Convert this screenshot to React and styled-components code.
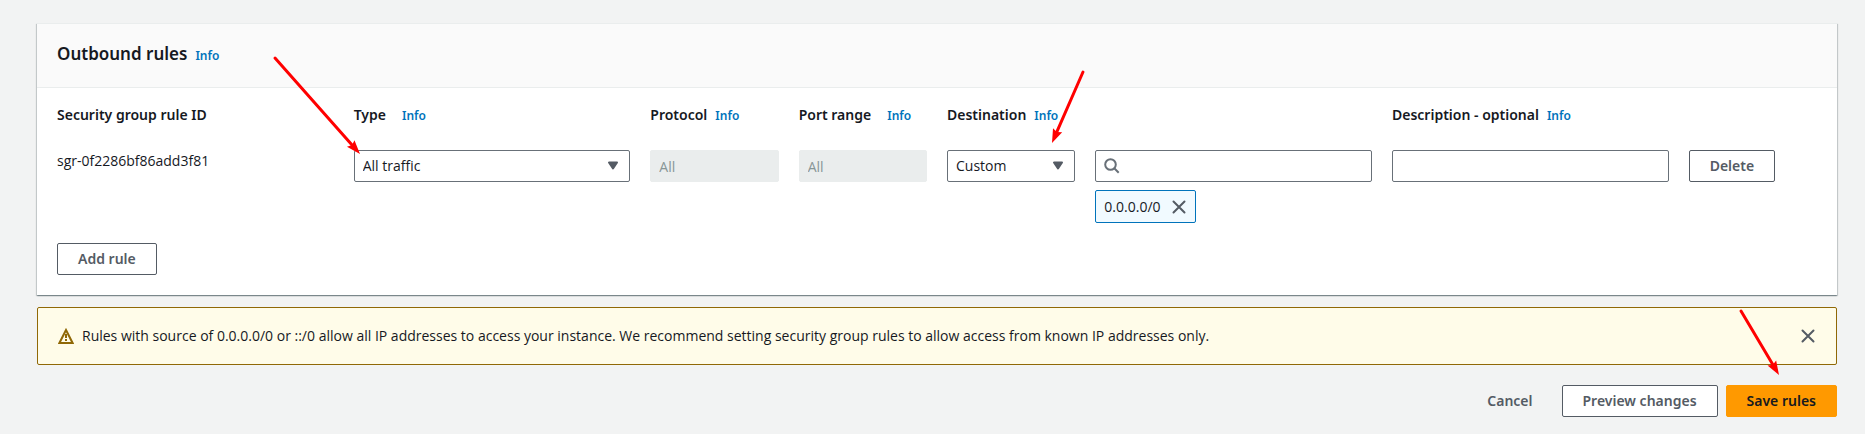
import React from "react";
import styled, { createGlobalStyle, css } from "styled-components";

const headingFont = `"Noto Sans", "Open Sans", sans-serif`;

const GlobalStyle = createGlobalStyle`
  *, *::before, *::after { box-sizing: border-box; }
  body {
    margin: 0;
    background: #f2f3f3;
    color: #16191f;
    font-family: "Open Sans", "Noto Sans", sans-serif;
    font-size: 14px;
    line-height: 22px;
  }
  button, input, select { font: inherit; color: inherit; }
`;

const Page = styled.main`
  padding: 23px 28px 17px 37px;
`;

const Panel = styled.section`
  background: #fff;
  border-top: 1px solid #eaeded;
  box-shadow:
    0 1px 1px 0 rgba(0, 28, 36, 0.3),
    1px 1px 1px 0 rgba(0, 28, 36, 0.15),
    -1px 1px 1px 0 rgba(0, 28, 36, 0.15);
`;

const PanelHeader = styled.header`
  display: flex;
  align-items: baseline;
  gap: 8px;
  padding: 18px 20px 21px;
  background: #fafafa;
  border-bottom: 1px solid #eaeded;
`;

const Title = styled.h2`
  margin: 0;
  font-family: ${headingFont};
  font-size: 17px;
  font-weight: 600;
  line-height: 24px;
`;

const InfoLink = styled.a`
  color: #0073bb;
  font-family: ${headingFont};
  font-size: 12px;
  font-weight: 600;
  line-height: 20px;
  text-decoration: none;
`;

const PanelBody = styled.div`
  padding: 16px 20px 20px;
`;

const Grid = styled.div`
  display: grid;
  grid-template-columns: repeat(12, minmax(0, 1fr));
  column-gap: 20px;
`;

const HeadCell = styled.div`
  grid-column: span ${(p) => p.$span};
  display: flex;
  align-items: baseline;
  gap: ${(p) => (p.$wide ? "16px" : "8px")};
  padding-bottom: 24px;
  white-space: nowrap;
`;

const Label = styled.label`
  font-family: ${headingFont};
  font-weight: 600;
`;

const Cell = styled.div`
  position: relative;
  grid-column: span ${(p) => p.$span};
`;

const fieldStyle = css`
  display: block;
  width: 100%;
  height: 32px;
  padding: 0 8px;
  border: 1px solid #687078;
  border-radius: 2px;
  background: #fff;
`;

const TextInput = styled.input`
  ${fieldStyle}
  &:disabled {
    border-color: #eaeded;
    background: #eaeded;
    color: #879596;
  }
`;

const SelectBox = styled.div`
  display: grid;
  align-items: center;
  > * { grid-area: 1 / 1; }
  > svg {
    justify-self: end;
    margin-right: 11px;
    pointer-events: none;
  }
`;

const Select = styled.select`
  ${fieldStyle}
  appearance: none;
`;

const SearchBox = styled.div`
  display: flex;
  align-items: center;
  gap: 8px;
  height: 32px;
  padding: 0 8px;
  border: 1px solid #687078;
  border-radius: 2px;
`;

const SearchInput = styled.input`
  flex: 1;
  min-width: 0;
  padding: 0;
  border: 0;
  outline: 0;
  background: transparent;
`;

const Token = styled.div`
  display: flex;
  width: fit-content;
  align-items: center;
  gap: 10px;
  height: 33px;
  margin-top: 8px;
  padding: 0 8px;
  border: 1px solid #0073bb;
  border-radius: 2px;
  background: #f1faff;
`;

const IconButton = styled.button`
  display: flex;
  padding: 0;
  border: 0;
  background: transparent;
  color: #545b64;
`;

const variants = {
  normal: css`
    border-color: #545b64;
    background: #fff;
    color: #545b64;
  `,
  link: css`
    border-color: transparent;
    background: transparent;
    color: #545b64;
  `,
  primary: css`
    border-color: #ff9900;
    background: #ff9900;
    color: #16191f;
  `,
};

const Button = styled.button`
  height: 32px;
  padding: 0 20px;
  border: 1px solid;
  border-radius: 2px;
  font-family: ${headingFont};
  font-weight: 600;
  line-height: 20px;
  white-space: nowrap;
  ${(p) => variants[p.$variant || "normal"]}
`;

const AddRow = styled.div`
  margin-top: 20px;
`;

const Alert = styled.div`
  display: flex;
  align-items: center;
  gap: 8px;
  min-height: 58px;
  margin-top: 12px;
  padding: 8px 20px;
  border: 1px solid #906806;
  border-radius: 2px;
  background: #fffce9;
`;

const AlertText = styled.p`
  flex: 1;
  margin: 0;
`;

const Actions = styled.footer`
  display: flex;
  justify-content: flex-end;
  gap: 8px;
  margin-top: 20px;
`;

const ActionSlot = styled.div`
  position: relative;
`;

const Arrow = styled.svg`
  position: absolute;
  left: ${(p) => p.$left};
  top: ${(p) => p.$top};
  overflow: visible;
  pointer-events: none;
  z-index: 1;
`;

function Pointer({ left, top, dx, dy }) {
  const length = Math.hypot(dx, dy);
  const ux = dx / length;
  const uy = dy / length;
  const bx = dx - ux * 14;
  const by = dy - uy * 14;
  const head = `${dx},${dy} ${bx - uy * 5},${by + ux * 5} ${bx + ux * 2},${by + uy * 2} ${bx + uy * 5},${by - ux * 5}`;
  return (
    <Arrow $left={left} $top={top} width="1" height="1" aria-hidden="true">
      <line x1="0" y1="0" x2={bx + ux * 3} y2={by + uy * 3} stroke="#ff0000" strokeWidth="3" strokeLinecap="round" />
      <polygon points={head} fill="#ff0000" />
    </Arrow>
  );
}

const Caret = () => (
  <svg width="12" height="10" viewBox="0 0 12 10" aria-hidden="true">
    <path d="M2 1.5h8L6 7.5z" fill="#545b64" stroke="#545b64" strokeWidth="2" strokeLinejoin="round" />
  </svg>
);

const SearchIcon = () => (
  <svg width="16" height="16" viewBox="0 0 16 16" fill="none" stroke="#687078" strokeWidth="2" aria-hidden="true">
    <circle cx="6.5" cy="6.5" r="5.3" />
    <path d="M10.3 10.3l4.4 4.4" />
  </svg>
);

const CloseIcon = () => (
  <svg width="16" height="16" viewBox="0 0 16 16" fill="none" stroke="currentColor" strokeWidth="2" strokeLinecap="round" aria-hidden="true">
    <path d="M2.5 2.5l11 11M13.5 2.5l-11 11" />
  </svg>
);

const WarningIcon = () => (
  <svg width="16" height="16" viewBox="0 0 16 16" fill="none" stroke="#906806" strokeWidth="2" aria-hidden="true">
    <path d="M8 2L14.6 15H1.4z" />
    <path d="M8 6v4M8 11v2" />
  </svg>
);

const Info = ({ about }) => (
  <InfoLink href="#info" aria-label={`Info about ${about}`}>Info</InfoLink>
);

export default function App() {
  return (
    <>
      <GlobalStyle />
      <Page>
        <Panel>
          <PanelHeader>
            <Title>Outbound rules</Title>
            <Info about="outbound rules" />
          </PanelHeader>
          <PanelBody>
            <Grid>
              <HeadCell $span={2}><Label as="span">Security group rule ID</Label></HeadCell>
              <HeadCell $span={2} $wide><Label htmlFor="type">Type</Label><Info about="type" /></HeadCell>
              <HeadCell $span={1}><Label htmlFor="protocol">Protocol</Label><Info about="protocol" /></HeadCell>
              <HeadCell $span={1} $wide><Label htmlFor="port">Port range</Label><Info about="port range" /></HeadCell>
              <HeadCell $span={3}><Label htmlFor="destination">Destination</Label><Info about="destination" /></HeadCell>
              <HeadCell $span={3}><Label htmlFor="description">Description - optional</Label><Info about="description" /></HeadCell>

              <Cell $span={2}>sgr-0f2286bf86add3f81</Cell>
              <Cell $span={2}>
                <SelectBox>
                  <Select id="type"><option>All traffic</option></Select>
                  <Caret />
                </SelectBox>
                <Pointer left="-79px" top="-92px" dx={85} dy={96} />
              </Cell>
              <Cell $span={1}><TextInput id="protocol" defaultValue="All" disabled /></Cell>
              <Cell $span={1}><TextInput id="port" defaultValue="All" disabled /></Cell>
              <Cell $span={1}>
                <SelectBox>
                  <Select id="destination"><option>Custom</option></Select>
                  <Caret />
                </SelectBox>
                <Pointer left="calc(100% + 8px)" top="-78px" dx={-31} dy={71} />
              </Cell>
              <Cell $span={2}>
                <SearchBox>
                  <SearchIcon />
                  <SearchInput type="search" aria-label="Search destinations" />
                </SearchBox>
                <Token>
                  0.0.0.0/0
                  <IconButton type="button" aria-label="Remove 0.0.0.0/0"><CloseIcon /></IconButton>
                </Token>
              </Cell>
              <Cell $span={2}><TextInput id="description" type="text" /></Cell>
              <Cell $span={1}><Button type="button">Delete</Button></Cell>
            </Grid>
            <AddRow><Button type="button">Add rule</Button></AddRow>
          </PanelBody>
        </Panel>

        <Alert role="status">
          <WarningIcon />
          <AlertText>
            Rules with source of 0.0.0.0/0 or ::/0 allow all IP addresses to access your instance. We recommend setting security group rules to allow access from known IP addresses only.
          </AlertText>
          <IconButton type="button" aria-label="Dismiss"><CloseIcon /></IconButton>
        </Alert>

        <Actions>
          <Button type="button" $variant="link">Cancel</Button>
          <Button type="button">Preview changes</Button>
          <ActionSlot>
            <Button type="button" $variant="primary">Save rules</Button>
            <Pointer left="calc(100% - 96px)" top="-74px" dx={38} dy={64} />
          </ActionSlot>
        </Actions>
      </Page>
    </>
  );
}
